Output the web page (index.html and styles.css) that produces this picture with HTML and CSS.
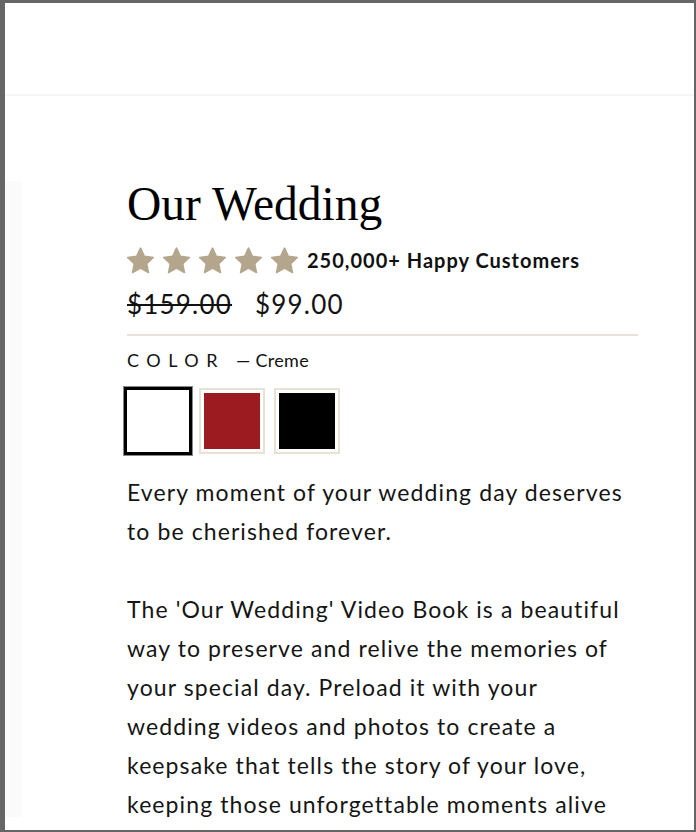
FILE: index.html
```html
<!DOCTYPE html>
<html lang="en">
<head>
<meta charset="utf-8">
<title>Our Wedding</title>
<link rel="stylesheet" href="styles.css">
</head>
<body>
<div class="page">
  <header class="header"></header>
  <div class="main">
    <div class="side"></div>
    <section class="product">
      <h1 class="title">Our Wedding</h1>
      <div class="rating">
        <div class="stars">
          <svg class="star" viewBox="0 0 24 24"><path d="M12 1L15.41 8.31 23.41 9.29 17.52 14.79 19.05 22.71 12 18.8 4.95 22.71 6.48 14.79 0.59 9.29 8.59 8.31Z"/></svg>
          <svg class="star" viewBox="0 0 24 24"><path d="M12 1L15.41 8.31 23.41 9.29 17.52 14.79 19.05 22.71 12 18.8 4.95 22.71 6.48 14.79 0.59 9.29 8.59 8.31Z"/></svg>
          <svg class="star" viewBox="0 0 24 24"><path d="M12 1L15.41 8.31 23.41 9.29 17.52 14.79 19.05 22.71 12 18.8 4.95 22.71 6.48 14.79 0.59 9.29 8.59 8.31Z"/></svg>
          <svg class="star" viewBox="0 0 24 24"><path d="M12 1L15.41 8.31 23.41 9.29 17.52 14.79 19.05 22.71 12 18.8 4.95 22.71 6.48 14.79 0.59 9.29 8.59 8.31Z"/></svg>
          <svg class="star" viewBox="0 0 24 24"><path d="M12 1L15.41 8.31 23.41 9.29 17.52 14.79 19.05 22.71 12 18.8 4.95 22.71 6.48 14.79 0.59 9.29 8.59 8.31Z"/></svg>
        </div>
        <span class="customers">250,000+ Happy Customers</span>
      </div>
      <div class="prices">
        <s class="old-price">$159.00</s>
        <span class="new-price">$99.00</span>
      </div>
      <hr class="divider">
      <div class="color-row">
        <span class="color-label">COLOR</span>
        <span class="color-value">— Creme</span>
      </div>
      <div class="swatches">
        <button class="swatch selected"><span class="fill creme"></span></button>
        <button class="swatch"><span class="fill red"></span></button>
        <button class="swatch"><span class="fill black"></span></button>
      </div>
      <div class="description">
        <p>Every moment of your wedding day deserves to be cherished forever.</p>
        <p>The 'Our Wedding' Video Book is a beautiful way to preserve and relive the memories of your special day. Preload it with your wedding videos and photos to create a keepsake that tells the story of your love, keeping those unforgettable moments alive</p>
      </div>
    </section>
  </div>
</div>
</body>
</html>
```

FILE: styles.css
```css
html, body {
  margin: 0;
  padding: 0;
  background: #666666;
  height: 832px;
  overflow: hidden;
}

.page {
  margin: 3px 2px 0 5px;
  height: 827px;
  background: #ffffff;
  overflow: hidden;
  font-family: "Lato", "Liberation Sans", sans-serif;
  color: #121212;
}

.header {
  height: 91px;
  border-bottom: 2px solid #f6f6f6;
}

.main {
  display: flex;
  align-items: flex-start;
}

.side {
  flex: 0 0 16px;
  height: 636px;
  margin-top: 85px;
  background: #fafafa;
}

.product {
  margin-left: 106px;
  width: 511px;
  padding-top: 82px;
}

.title {
  margin: 0;
  font-family: "Liberation Serif", serif;
  font-weight: 400;
  font-size: 47.5px;
  line-height: 52px;
  color: #000;
}

.rating {
  display: flex;
  align-items: center;
  margin-top: 16px;
  height: 28px;
}

.stars {
  display: flex;
  gap: 9px;
}

.star {
  width: 27px;
  height: 27px;
  fill: #b4a68d;
  stroke: #b4a68d;
  stroke-width: 1.4;
  stroke-linejoin: round;
}

.customers {
  margin-left: 9px;
  font-size: 20px;
  font-weight: 700;
  letter-spacing: 1px;
  color: #111;
}

.prices {
  display: flex;
  gap: 23px;
  margin-top: 15px;
  font-size: 26px;
  line-height: 30px;
  letter-spacing: 1.2px;
}

.old-price {
  color: #111;
}

.divider {
  margin: 15px 0 0;
  border: 0;
  border-top: 2px solid #e8e3da;
}

.color-row {
  margin-top: 12px;
  line-height: 24px;
  display: flex;
  align-items: baseline;
}

.color-label {
  font-size: 18px;
  letter-spacing: 7.5px;
}

.color-value {
  margin-left: 11px;
  font-size: 18px;
  letter-spacing: 0.3px;
}

.swatches {
  display: flex;
  align-items: center;
  gap: 9px;
  margin: 15px 0 0 -3px;
}

.swatch {
  box-sizing: border-box;
  width: 66px;
  height: 66px;
  padding: 3px;
  border: 2px solid #e8e2d6;
  background: #fff;
  display: flex;
}

.swatch.selected {
  width: 68px;
  height: 68px;
  margin-right: -2px;
  border: 3px solid #000;
  box-shadow: 0 0 0 1px #888;
}

.fill {
  flex: 1;
}

.creme { background: #fff; }
.red { background: #9b1b20; }
.black { background: #000; }

.description {
  max-width: 506px;
  margin-top: 18px;
  font-size: 23px;
  line-height: 39px;
  letter-spacing: 1.1px;
  color: #151515;
}

.description p {
  margin: 0 0 39px;
}
```
